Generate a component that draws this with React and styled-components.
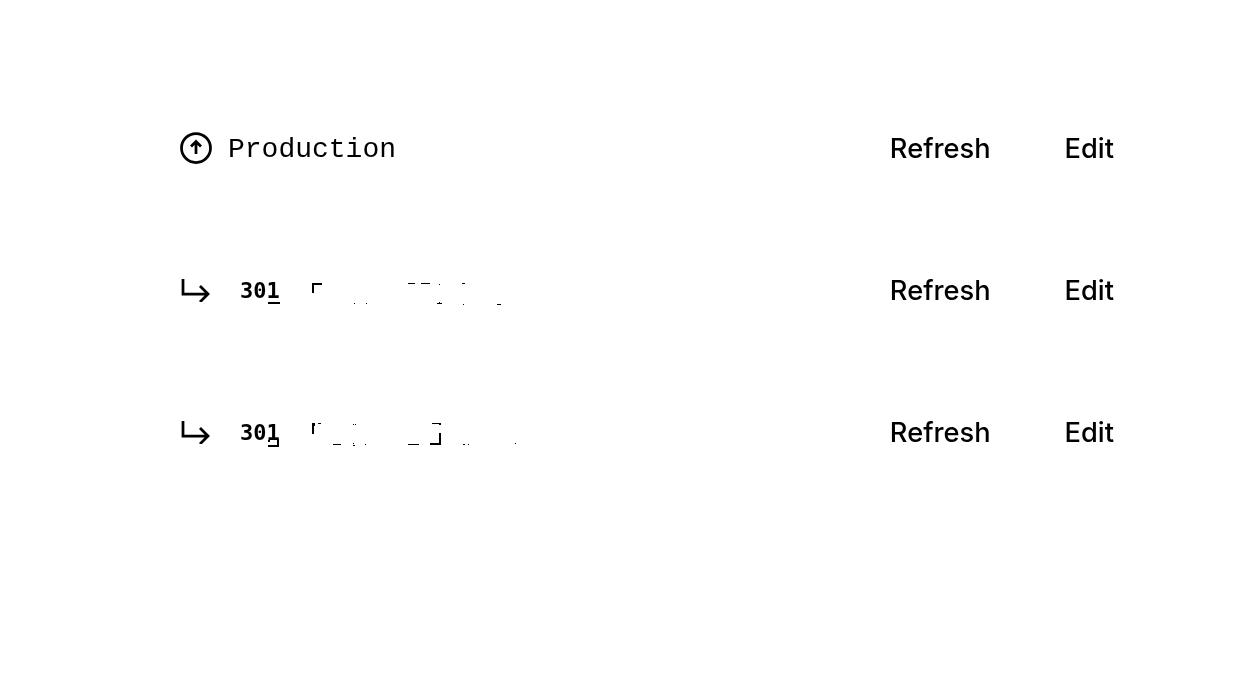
import React from "react";
import styled, { createGlobalStyle } from "styled-components";

const GlobalStyle = createGlobalStyle`
  html, body {
    margin: 0;
    background: #fff;
  }
`;

const Page = styled.div`
  width: 1240px;
  height: 690px;
  box-sizing: border-box;
  padding: 107px 126px 0 180px;
  color: #000;
  filter: url(#threshold);
`;

const Row = styled.div`
  display: flex;
  align-items: center;
  height: 84px;
  margin-bottom: 58px;
`;

const Icon = styled.svg`
  flex: none;
  margin-bottom: 2px;
`;

const Name = styled.span`
  font-family: "Liberation Mono", monospace;
  font-size: 28px;
  margin-left: 16px;
`;

const Code = styled.span`
  font-family: "DejaVu Sans Mono", monospace;
  font-weight: 700;
  font-size: 22px;
  margin-left: 30px;
  margin-bottom: 2px;
`;

const Residue = styled.svg`
  margin-left: -14px;
  flex: none;
`;

const Actions = styled.div`
  margin-left: auto;
  margin-bottom: 2px;
  display: flex;
  gap: 74px;
`;

const Action = styled.a`
  font-family: Inter, sans-serif;
  font-size: 27.25px;
  font-weight: 500;
`;

const UpIcon = () => (
  <Icon width="32" height="32" viewBox="0 0 32 32" fill="none" stroke="#000" strokeWidth="2.75">
    <circle cx="16" cy="16" r="14.5" />
    <path d="M16 22V9.5M11 14.5l5-5 5 5" />
  </Icon>
);

const ArrowIcon = () => (
  <Icon width="30" height="24" viewBox="0 0 30 24" fill="none" stroke="#000" strokeWidth="2.75">
    <path d="M3 1v15h24M20 8l8 8-8 8" />
  </Icon>
);

const Links = () => (
  <Actions>
    <Action>Refresh</Action>
    <Action>Edit</Action>
  </Actions>
);

// what is left of the hidden target text, as x y w h from the svg's corner
const firstMarks = [
  [2, 27, 12, 2],
  [46, 8, 10, 2], [46, 10, 2, 8],
  [88, 28, 1, 1], [100, 28, 1, 1],
  [142, 8, 7, 1], [155, 8, 9, 1], [173, 9, 1, 1], [196, 8, 3, 1],
  [171, 28, 5, 1], [173, 27, 1, 1], [197, 29, 1, 1], [231, 29, 4, 1],
];

const secondMarks = [
  [2, 28, 10, 2], [11, 22, 2, 8], [2, 23, 2, 2],
  [46, 6, 3, 3], [52, 6, 3, 1], [46, 9, 2, 8],
  [87, 7, 1, 1], [89, 7, 1, 1],
  [67, 27, 8, 1], [87, 28, 2, 1], [87, 26, 1, 1], [99, 27, 1, 1],
  [142, 27, 11, 1], [164, 26, 11, 2], [173, 16, 2, 10],
  [166, 6, 9, 1], [173, 7, 2, 1],
  [197, 27, 2, 1], [202, 27, 1, 1], [249, 26, 1, 1],
];

const Marks = ({ items }) => (
  <Residue width="260" height="32" viewBox="0 0 260 32" fill="#000">
    {items.map(([x, y, w, h]) => (
      <rect key={`${x}-${y}`} x={x} y={y} width={w} height={h} />
    ))}
  </Residue>
);

export default function App() {
  return (
    <>
      <GlobalStyle />
      <svg width="0" height="0" style={{ position: "absolute" }}>
        <filter id="threshold" colorInterpolationFilters="sRGB">
          <feComponentTransfer>
            <feFuncR type="discrete" tableValues="0 0 0 1" />
            <feFuncG type="discrete" tableValues="0 0 0 1" />
            <feFuncB type="discrete" tableValues="0 0 0 1" />
          </feComponentTransfer>
        </filter>
      </svg>
      <Page>
        <Row>
          <UpIcon />
          <Name>Production</Name>
          <Links />
        </Row>
        <Row>
          <ArrowIcon />
          <Code>301</Code>
          <Marks items={firstMarks} />
          <Links />
        </Row>
        <Row>
          <ArrowIcon />
          <Code>301</Code>
          <Marks items={secondMarks} />
          <Links />
        </Row>
      </Page>
    </>
  );
}
